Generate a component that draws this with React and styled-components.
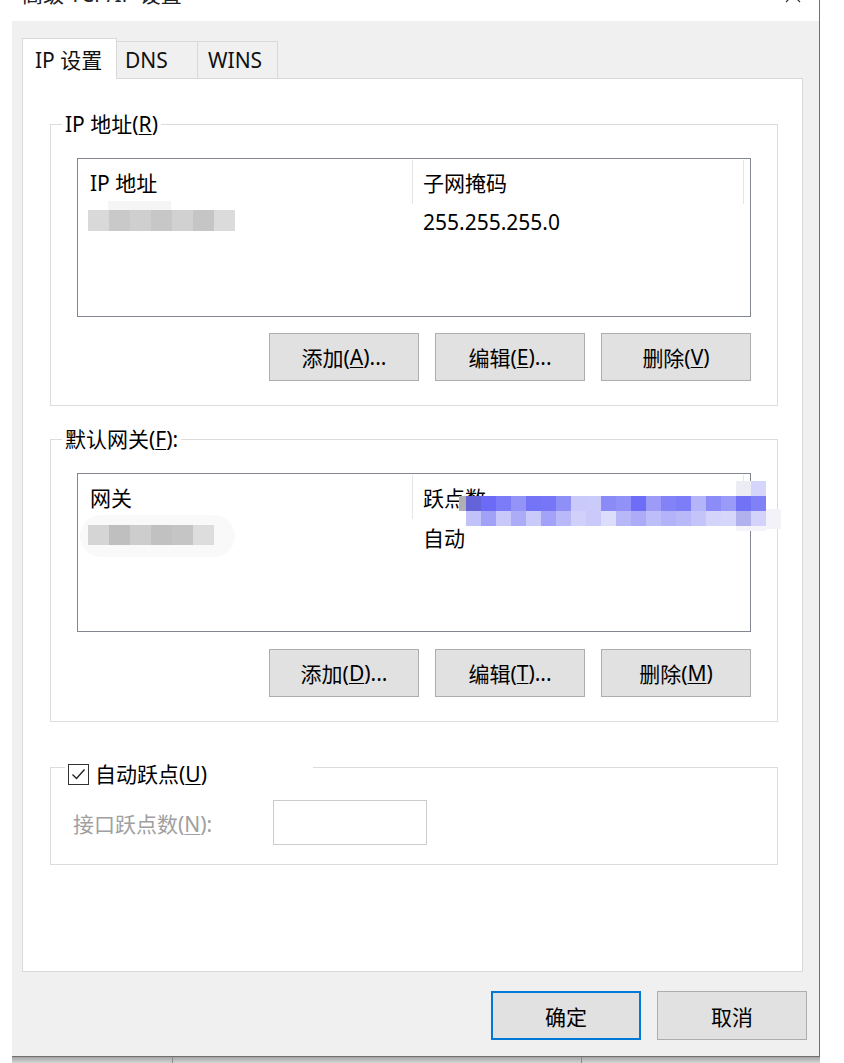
import React from 'react'
import styled, { createGlobalStyle } from 'styled-components'

const GlobalStyle = createGlobalStyle`
  html, body { margin: 0; padding: 0; background: #fff; }
  body {
    font-family: "Noto Sans", "Noto Sans CJK SC", sans-serif;
    font-size: 21px;
    color: #000;
  }
  * { box-sizing: border-box; }
`

const Page = styled.div`
  width: 844px;
  height: 1063px;
  overflow: hidden;
  background: #fff;
  display: flex;
  flex-direction: column;
  align-items: flex-start;
`

const Window = styled.div`
  margin-left: 12px;
  width: 808px;
  border-right: 1px solid #6f6f6f;
  border-bottom: 1px solid #6f6f6f;
  display: flex;
  flex-direction: column;
`

const TitleBar = styled.div`
  height: 21px;
  background: #fff;
  overflow: hidden;
  display: flex;
  justify-content: space-between;
  align-items: flex-start;
  padding: 0 18px 0 10px;
`

const Title = styled.span`
  line-height: 21px;
  margin-top: -16px;
  color: #222;
`

const CloseIcon = styled.svg`
  margin-top: -13px;
`

const Body = styled.div`
  height: 1035px;
  background: #f0f0f0;
  padding: 17px 16px 16px 10px;
  display: flex;
  flex-direction: column;
`

const TabStrip = styled.div`
  height: 40px;
  display: flex;
  align-items: flex-end;
  position: relative;
  z-index: 1;
`

const Tab = styled.div`
  width: ${p => p.$w}px;
  height: ${p => (p.$active ? 41 : 37)}px;
  margin-bottom: ${p => (p.$active ? -1 : 0)}px;
  padding-left: ${p => p.$pl}px;
  background: ${p => (p.$active ? '#fff' : '#f0f0f0')};
  border: 1px solid #d9d9d9;
  border-bottom: none;
  border-left: ${p => (p.$first ? '1px solid #d9d9d9' : 'none')};
  display: flex;
  align-items: center;
  color: #111;
`

const Panel = styled.div`
  height: 894px;
  background: #fff;
  border: 1px solid #d9d9d9;
  padding: 45px 24px 0 27px;
  display: flex;
  flex-direction: column;
`

const Group = styled.div`
  position: relative;
  border: 1px solid #dcdcdc;
  margin-top: ${p => p.$mt || 0}px;
  padding: ${p => p.$pad};
`

const Legend = styled.div`
  position: absolute;
  left: ${p => p.$left}px;
  top: ${p => p.$top}px;
  width: ${p => (p.$width ? `${p.$width}px` : 'auto')};
  height: 24px;
  line-height: 24px;
  padding: 0 3px;
  background: #fff;
  display: flex;
  align-items: center;
  gap: 6px;
  white-space: nowrap;
`

const Key = styled.u`
  text-decoration-thickness: 1px;
  text-underline-offset: 2px;
`

const ListBox = styled.div`
  position: relative;
  height: 159px;
  border: 1px solid #828790;
  background: #fff;
  display: flex;
  flex-direction: column;
`

const ListRow = styled.div`
  display: grid;
  grid-template-columns: 335px 331px 1fr;
  height: ${p => p.$h}px;
`

const HeadCell = styled.div`
  margin-top: 1px;
  height: 44px;
  padding-left: ${p => p.$pl}px;
  border-right: ${p => (p.$last ? 'none' : '1px solid #e5e5e5')};
  display: flex;
  align-items: center;
  white-space: nowrap;
`

const Cell = styled.div`
  padding-left: 10px;
  display: flex;
  align-items: center;
  white-space: nowrap;
`

const ButtonRow = styled.div`
  display: flex;
  justify-content: flex-end;
  gap: ${p => p.$gap || 16}px;
  margin-top: ${p => p.$mt || 0}px;
  margin-right: ${p => p.$mr || 0}px;
`

const Button = styled.button`
  width: 150px;
  height: ${p => p.$h || 48}px;
  padding: 0;
  font: inherit;
  color: #000;
  background: #e1e1e1;
  border: ${p => (p.$default ? '2px solid #0078d7' : '1px solid #adadad')};
  display: flex;
  align-items: center;
  justify-content: center;
`

const Check = styled.span`
  width: 21px;
  height: 21px;
  border: 1px solid #333;
  background: #fff;
  display: inline-flex;
  align-items: center;
  justify-content: center;
`

const FieldRow = styled.div`
  display: flex;
  align-items: center;
`

const DimLabel = styled.span`
  width: 200px;
  color: #a0a0a0;
`

const NumberBox = styled.div`
  width: 154px;
  height: 45px;
  border: 1px solid #cccccc;
  background: #fff;
`

const Mosaic = styled.svg`
  position: absolute;
  left: ${p => p.$x}px;
  top: ${p => p.$y}px;
  pointer-events: none;
`

const Strip = styled.div`
  margin-left: 12px;
  width: 808px;
  height: 6px;
  display: flex;
  background: linear-gradient(#a4a4a4, #d6d6d6);
`

const StripSeg = styled.div`
  width: ${p => p.$w}px;
  border-right: 1px solid #8a8a8a;
`

const ipCells = ['#d9d9d9', '#c9c9c9', '#cfcfcf', '#c7c7c7', '#d1d1d1', '#c5c5c5', '#dbdbdb']
const gwCells = ['#d5d5d5', '#bfbfbf', '#cdcdcd', '#c1c1c1', '#c5c5c5', '#dddddd']
const blueTop = ['#6464d8', '#6b6bf7', '#7c7cf8', '#9393f8', '#7474f7', '#7676f7', '#8f8ff8', '#c9c9fa', '#cbcbfa', '#8b8bf8',
  '#9191f8', '#6d6df7', '#9c9cf8', '#8383f7', '#7d7df7', '#b4b4f9', '#8c8cf8', '#9a9af8', '#7272f7', '#8080f7']
const blueBottom = ['#c2c2fa', '#a1a1f8', '#c8c8fa', '#ababf8', '#c9c9fa', '#a2a2f8', '#b9b9f9', '#d0d0fb', '#c9c9fa', '#dcdcfb',
  '#b8b8f9', '#ababf8', '#bdbdf9', '#b3b3f9', '#b9b9f9', '#c4c4fa', '#d4d4fb', '#d6d6fb', '#b1b1ee', '#d2d2fb']

function GrayBlur({ cells, halo }) {
  return (
    <svg width="160" height="36" style={{ overflow: 'visible' }}>
      {halo && <rect x="-8" y="-4" width="155" height="42" rx="21" fill="#f9f9f9" />}
      {!halo && <rect x="20" y="-3" width="63" height="9" fill="#f5f5f5" />}
      {cells.map((c, i) => (
        <rect key={i} x={i * 21} y="6" width="21" height={halo ? 20 : 21} fill={c} />
      ))}
    </svg>
  )
}

function BlueBlur() {
  return (
    <Mosaic $x={381} $y={7} width="322" height="52">
      <rect x="277" y="0" width="15" height="15" fill="#ececf4" />
      <rect x="292" y="0" width="15" height="15" fill="#d5d5fb" />
      <rect x="0" y="15" width="7" height="15" fill="#b0b0b4" />
      {blueTop.map((c, i) => (
        <rect key={'t' + i} x={7 + i * 15} y="15" width="15" height="15" fill={c} />
      ))}
      {blueBottom.map((c, i) => (
        <rect key={'b' + i} x={7 + i * 15} y="30" width="15" height="15" fill={c} />
      ))}
      <rect x="307" y="28" width="15" height="20" fill="#f2f2f8" />
      <rect x="277" y="45" width="30" height="5" fill="#f4f4fa" />
    </Mosaic>
  )
}

function AddressList({ head1, head2, children, overlay }) {
  return (
    <ListBox>
      <ListRow $h={45}>
        <HeadCell $pl={12}>{head1}</HeadCell>
        <HeadCell $pl={10}>{head2}</HeadCell>
        <HeadCell $last />
      </ListRow>
      {children}
      {overlay}
    </ListBox>
  )
}

export default function App() {
  return (
    <Page>
      <GlobalStyle />
      <Window>
        <TitleBar>
          <Title>高级 TCP/IP 设置</Title>
          <CloseIcon width="16" height="16" viewBox="0 0 16 16">
            <path d="M1 1 L15 15 M15 1 L1 15" stroke="#333" strokeWidth="1.2" fill="none" />
          </CloseIcon>
        </TitleBar>
        <Body>
          <TabStrip>
            <Tab $active $first $w={95} $pl={12}>IP 设置</Tab>
            <Tab $w={81} $pl={8}>DNS</Tab>
            <Tab $w={80} $pl={10}>WINS</Tab>
          </TabStrip>
          <Panel>
            <Group $pad="33px 26px 24px 26px">
              <Legend $left={11} $top={-13}>
                <span>IP 地址(<Key>R</Key>)</span>
              </Legend>
              <AddressList head1="IP 地址" head2="子网掩码">
                <ListRow $h={36}>
                  <Cell><GrayBlur cells={ipCells} /></Cell>
                  <Cell>255.255.255.0</Cell>
                </ListRow>
              </AddressList>
              <ButtonRow $mt={16}>
                <Button>添加(<Key>A</Key>)...</Button>
                <Button>编辑(<Key>E</Key>)...</Button>
                <Button>删除(<Key>V</Key>)</Button>
              </ButtonRow>
            </Group>

            <Group $mt={33} $pad="33px 26px 24px 26px">
              <Legend $left={11} $top={-13}>
                <span>默认网关(<Key>F</Key>):</span>
              </Legend>
              <AddressList head1="网关" head2="跃点数" overlay={<BlueBlur />}>
                <ListRow $h={36}>
                  <Cell><GrayBlur cells={gwCells} halo /></Cell>
                  <Cell>自动</Cell>
                </ListRow>
              </AddressList>
              <ButtonRow $mt={17}>
                <Button>添加(<Key>D</Key>)...</Button>
                <Button>编辑(<Key>T</Key>)...</Button>
                <Button>删除(<Key>M</Key>)</Button>
              </ButtonRow>
            </Group>

            <Group $mt={45} $pad="32px 22px 19px 22px">
              <Legend $left={14} $top={-6} $width={248}>
                <Check>
                  <svg width="17" height="17" viewBox="0 0 17 17">
                    <path d="M2.5 8.5 L6.5 12.5 L14.5 3.5" stroke="#222" strokeWidth="1.4" fill="none" />
                  </svg>
                </Check>
                <span>自动跃点(<Key>U</Key>)</span>
              </Legend>
              <FieldRow>
                <DimLabel>接口跃点数(<Key>N</Key>):</DimLabel>
                <NumberBox />
              </FieldRow>
            </Group>
          </Panel>
          <ButtonRow $mt={19} $gap={16} $mr={-4}>
            <Button $default $h={49}>确定</Button>
            <Button $h={49}>取消</Button>
          </ButtonRow>
        </Body>
      </Window>
      <Strip>
        <StripSeg $w={161} />
        <StripSeg $w={409} />
      </Strip>
    </Page>
  )
}
